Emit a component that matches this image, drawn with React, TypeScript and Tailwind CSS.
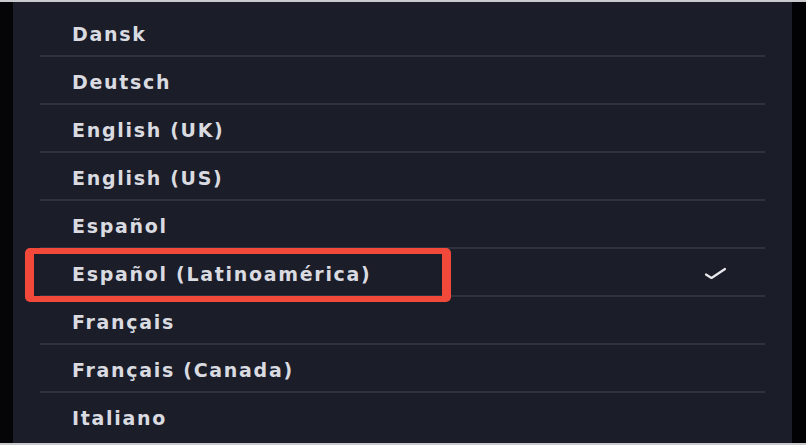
import React from "react";

const langs = [
  "Dansk",
  "Deutsch",
  "English (UK)",
  "English (US)",
  "Español",
  "Español (Latinoamérica)",
  "Français",
  "Français (Canada)",
  "Italiano",
];

export default function App() {
  return (
    <div className="w-[806px] h-[445px] bg-black flex flex-col overflow-hidden" style={{ fontFamily: "'DejaVu Sans', Verdana, sans-serif" }}>
      <div className="h-[2px] bg-[#c9cacd] shrink-0" />
      <div className="flex flex-1 min-h-0">
        <div className="w-[13px] bg-[#050507] shrink-0" />
        <div className="relative w-[779px] bg-[#1b1d29] shrink-0 pt-[7px]">
          {langs.map((l, i) => (
            <div key={l} className="relative h-[48px] flex items-center">
              <span className="pl-[59px] pt-[3px] text-[19px] font-bold tracking-[1.7px] text-[#d9dbe0]">{l}</span>
              {i === 5 && (
                <svg className="absolute left-[691px] top-[17px]" width="24" height="14" viewBox="0 0 24 14" fill="none">
                  <path d="M2 8.5 L7.5 12 L21 3" stroke="#e8e9ec" strokeWidth="2.2" strokeLinecap="round" strokeLinejoin="round" />
                </svg>
              )}
              {i < langs.length - 1 && (
                <div className="absolute bottom-0 left-[27px] w-[725px] h-[2px] bg-[#30323e]" />
              )}
            </div>
          ))}
          <div className="absolute left-[12px] top-[246px] w-[426px] h-[54px] border-x-[9px] border-y-[6px] border-[#f2493b] rounded-[5px]" />
        </div>
        <div className="flex-1 bg-[#020204]" />
      </div>
      <div className="h-[2px] bg-[#c9cacd] shrink-0" />
    </div>
  );
}
